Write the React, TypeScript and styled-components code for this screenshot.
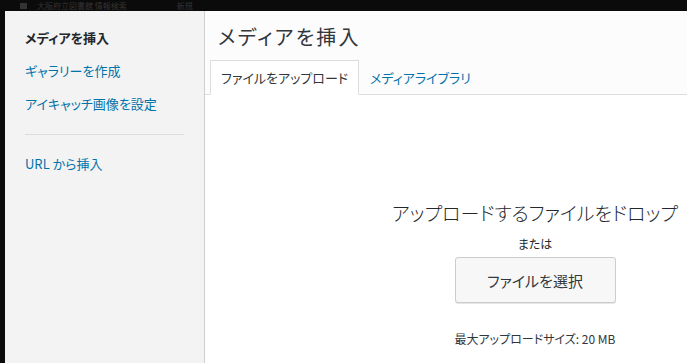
import React from "react";
import styled, { createGlobalStyle } from "styled-components";

const Global = createGlobalStyle`
  html, body { margin: 0; padding: 0; background: #0b0b0b; overflow: hidden; }
  body { font-family: "Noto Sans CJK JP", "Noto Sans", "Liberation Sans", sans-serif; font-feature-settings: "palt"; }
  * { box-sizing: border-box; }
`;

const Page = styled.div`
  width: 687px;
  height: 363px;
  display: flex;
  flex-direction: column;
  overflow: hidden;
`;

const AdminBar = styled.div`
  height: 11px;
  flex: 0 0 11px;
  display: flex;
  align-items: center;
  gap: 10px;
  padding-left: 20px;
  overflow: hidden;
  color: #333333;
  font-size: 8px;
  line-height: 10px;
`;

const BarIcon = styled.span`
  width: 7px;
  height: 6px;
  background: #333333;
`;

const BarText = styled.span<{ $gap?: number }>`
  white-space: nowrap;
  padding-right: ${(p) => p.$gap ?? 0}px;
`;

const Frame = styled.div`
  flex: 1;
  display: flex;
  padding-left: 5px;
  min-height: 0;
`;

const Sidebar = styled.nav`
  flex: 0 0 200px;
  background: #f3f3f3;
  border-right: 1px solid #cfcfcf;
  padding: 17px 20px 0 20px;
  display: flex;
  flex-direction: column;
`;

const MenuItem = styled.div<{ $active?: boolean }>`
  font-size: 13px;
  line-height: 20px;
  height: 33px;
  color: ${(p) => (p.$active ? "#23282d" : "#0073aa")};
  font-weight: ${(p) => (p.$active ? 700 : 400)};
  white-space: nowrap;
`;

const Separator = styled.div`
  height: 1px;
  background: #dcdcdc;
  margin: 7px 0 19px 0;
`;

const Main = styled.section`
  flex: 0 0 660px;
  display: flex;
  flex-direction: column;
  background: #fff;
`;

const Header = styled.header`
  background: #fcfcfc;
  border-bottom: 1px solid #dddddd;
  display: flex;
  flex-direction: column;
  padding: 0 0 0 5px;
`;

const Title = styled.h1`
  margin: 0;
  padding: 12px 0 0 8px;
  height: 49px;
  font-size: 20px;
  line-height: 28px;
  font-weight: 400;
  letter-spacing: 2.2px;
  color: #32373c;
`;

const Tabs = styled.div`
  display: flex;
  align-items: stretch;
  height: 35px;
  margin-bottom: -1px;
`;

const Tab = styled.div<{ $active?: boolean }>`
  padding: 0 10px;
  display: flex;
  align-items: center;
  font-size: 13px;
  color: ${(p) => (p.$active ? "#32373c" : "#0073aa")};
  background: ${(p) => (p.$active ? "#fff" : "transparent")};
  border: 1px solid ${(p) => (p.$active ? "#dddddd" : "transparent")};
  border-bottom-color: ${(p) => (p.$active ? "#fff" : "transparent")};
  white-space: nowrap;
`;

const Uploader = styled.div`
  flex: 1;
  display: flex;
  flex-direction: column;
  align-items: center;
  padding-top: 104px;
`;

const DropText = styled.h2`
  margin: 0;
  font-size: 19px;
  line-height: 28px;
  font-weight: 300;
  color: #23282d;
  white-space: nowrap;
`;

const OrText = styled.p`
  margin: 8px 0 4px;
  font-size: 12px;
  line-height: 18px;
  color: #23282d;
`;

const SelectButton = styled.button`
  width: 161px;
  height: 46px;
  background: #f7f7f7;
  border: 1px solid #cccccc;
  border-radius: 3px;
  box-shadow: 0 1px 0 #e6e6e6;
  font-family: inherit;
  font-feature-settings: "palt";
  font-size: 15px;
  font-weight: 400;
  color: #32373c;
  cursor: pointer;
`;

const MaxSize = styled.p`
  margin: 28px 0 0;
  font-size: 12px;
  line-height: 16px;
  color: #32373c;
`;

export default function App() {
  return (
    <Page>
      <Global />
      <AdminBar>
        <BarIcon />
        <BarText $gap={40}>大阪府立図書館 情報検索</BarText>
        <BarText>新規</BarText>
      </AdminBar>
      <Frame>
        <Sidebar>
          <MenuItem $active>メディアを挿入</MenuItem>
          <MenuItem>ギャラリーを作成</MenuItem>
          <MenuItem>アイキャッチ画像を設定</MenuItem>
          <Separator />
          <MenuItem>URL から挿入</MenuItem>
        </Sidebar>
        <Main>
          <Header>
            <Title>メディアを挿入</Title>
            <Tabs>
              <Tab $active>ファイルをアップロード</Tab>
              <Tab>メディアライブラリ</Tab>
            </Tabs>
          </Header>
          <Uploader>
            <DropText>アップロードするファイルをドロップ</DropText>
            <OrText>または</OrText>
            <SelectButton>ファイルを選択</SelectButton>
            <MaxSize>最大アップロードサイズ: 20 MB</MaxSize>
          </Uploader>
        </Main>
      </Frame>
    </Page>
  );
}
